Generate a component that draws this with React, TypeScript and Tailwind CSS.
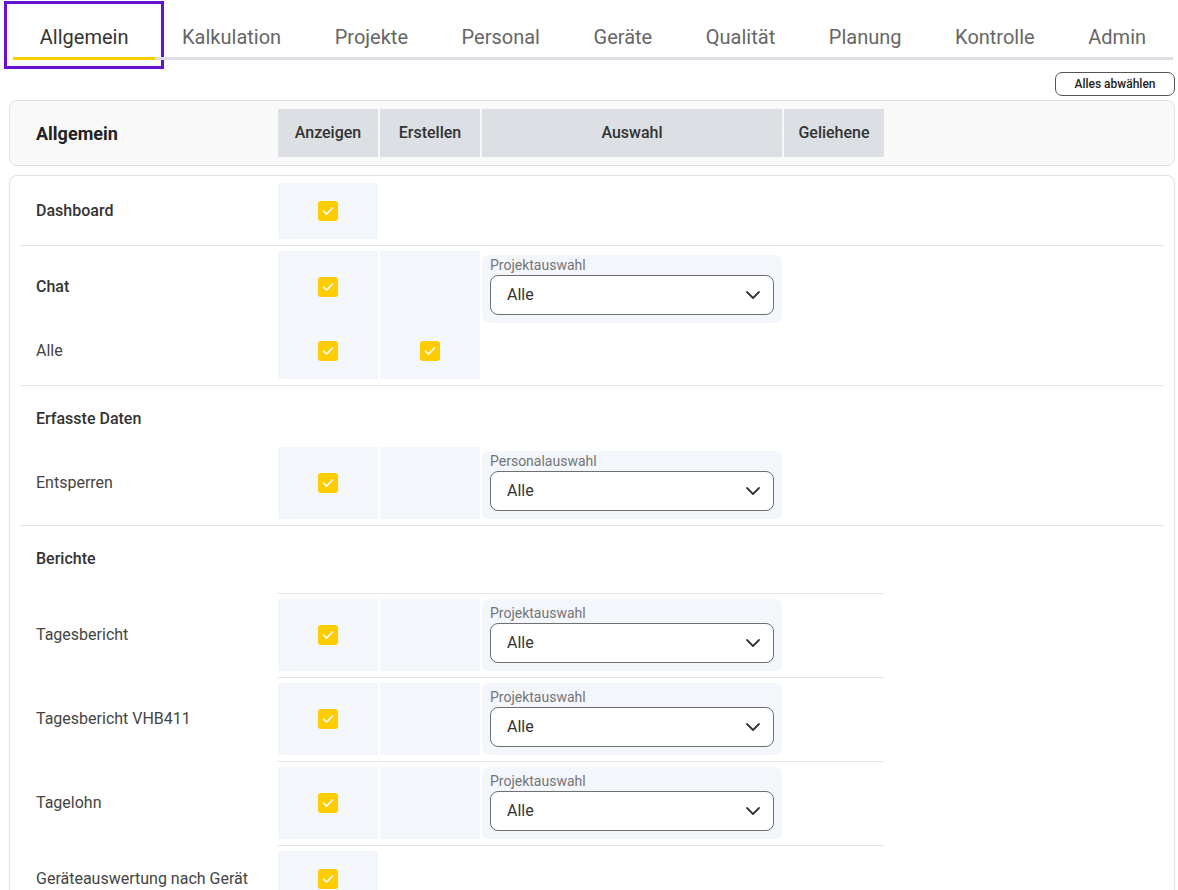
import { ChevronDown } from 'lucide-react';

const tabs = ['Allgemein', 'Kalkulation', 'Projekte', 'Personal', 'Geräte', 'Qualität', 'Planung', 'Kontrolle', 'Admin'];

function Check() {
  return (
    <span className="flex h-5 w-5 items-center justify-center rounded-[3px] bg-[#ffcc00]">
      <svg width="20" height="20" viewBox="0 0 20 20" fill="none">
        <path d="M5.5 10.2l3 2.9 6-6.1" stroke="white" strokeWidth="1.6" strokeLinecap="round" strokeLinejoin="round" />
      </svg>
    </span>
  );
}

function Cell({ checked, tall }: { checked?: boolean; tall?: boolean }) {
  return (
    <div className={`flex w-[100px] items-center justify-center bg-[#f3f6fb] ${tall ? 'h-[72px]' : 'h-14'}`}>
      {checked && <Check />}
    </div>
  );
}

function Select({ label, inset }: { label: string; inset?: boolean }) {
  return (
    <div className={`w-[300px] rounded-md bg-[#f3f6fb] px-2 pb-2 ${inset ? 'mt-1 h-[68px] pt-[2px]' : 'h-[72px] pt-1.5'}`}>
      <div className="text-[14px] leading-4 text-[#757575]">{label}</div>
      <div className="mt-0.5 flex h-10 items-center justify-between rounded-lg border border-[#6f6f6f] bg-white pl-4 pr-2">
        <span className="text-[16px] text-[#333]">Alle</span>
        <ChevronDown size={24} strokeWidth={1.8} className="text-[#333]" />
      </div>
    </div>
  );
}

function Label({ text, strong }: { text: string; strong?: boolean }) {
  return (
    <div
      className={`flex w-[258px] shrink-0 items-center pl-4 text-[16px] ${
        strong ? 'font-medium text-[#333]' : 'text-[#444]'
      }`}
    >
      {text}
    </div>
  );
}

function Section({ children, first }: { children: React.ReactNode; first?: boolean }) {
  return <div className={`pb-1.5 pt-[5px] ${first ? '' : 'border-t border-[#e3e3e3]'}`}>{children}</div>;
}

function BerichtRow({ label, select, create = true }: { label: string; select?: boolean; create?: boolean }) {
  return (
    <div className="flex">
      <Label text={label} />
      <div className="w-[606px] border-t border-[#e3e3e3] pb-1.5 pt-[5px]">
        <div className="flex gap-[2px]">
          <Cell checked tall={select} />
          {create && <Cell tall={select} />}
          {select && <Select label="Projektauswahl" />}
        </div>
      </div>
    </div>
  );
}

export default function App() {
  return (
    <div className="min-h-screen bg-white pl-[9px] pr-[3px] font-['Roboto',sans-serif] text-[#333]">
      {/* tabs */}
      <div className="flex pl-1 pt-[10px]">
        {tabs.map((t, i) => (
          <div
            key={t}
            className={`border-b-[3px] px-[26.8px] pb-2 pt-[15px] text-[20px] leading-6 ${
              i === 0
                ? 'border-[#ffcc00] text-[#333] outline-[3px] outline-offset-[6px] outline-[#6a10d0] outline-solid'
                : 'border-[#dcdfe4] text-[#666]'
            }`}
          >
            {t}
          </div>
        ))}
      </div>

      <div className="mt-3 flex justify-end">
        <button className="h-6 w-[120px] rounded-[7px] border border-[#555] text-[12px] font-medium text-[#222]">
          Alles abwählen
        </button>
      </div>

      {/* header card */}
      <div className="mt-1 flex rounded-lg border border-[#e0e0e0] bg-[#f9f9f9] py-2">
        <div className="flex w-[268px] items-center pl-[26px] text-[18px] font-bold text-[#222]">Allgemein</div>
        <div className="flex gap-[2px] text-[16px] font-medium text-[#333]">
          <div className="flex h-12 w-[100px] items-center justify-center bg-[#dcdfe4]">Anzeigen</div>
          <div className="flex h-12 w-[100px] items-center justify-center bg-[#dcdfe4]">Erstellen</div>
          <div className="flex h-12 w-[300px] items-center justify-center bg-[#dcdfe4]">Auswahl</div>
          <div className="flex h-12 w-[100px] items-center justify-center bg-[#dcdfe4]">Geliehene</div>
        </div>
      </div>

      {/* body card */}
      <div className="mt-[9px] rounded-lg border border-[#e0e0e0] px-[10px] pt-[2px]">
        <Section first>
          <div className="flex">
            <Label text="Dashboard" strong />
            <Cell checked />
          </div>
        </Section>

        <Section>
          <div className="flex">
            <Label text="Chat" strong />
            <div className="flex gap-[2px]">
              <Cell checked tall />
              <Cell tall />
              <div className="h-[72px]">
                <Select label="Projektauswahl" inset />
              </div>
            </div>
          </div>
          <div className="flex">
            <Label text="Alle" />
            <div className="flex gap-[2px]">
              <Cell checked />
              <Cell checked />
            </div>
          </div>
        </Section>

        <Section>
          <div className="flex h-14">
            <Label text="Erfasste Daten" strong />
          </div>
          <div className="flex">
            <Label text="Entsperren" />
            <div className="flex gap-[2px]">
              <Cell checked tall />
              <Cell tall />
              <div className="h-[72px]">
                <Select label="Personalauswahl" inset />
              </div>
            </div>
          </div>
        </Section>

        <Section>
          <div className="mb-1.5 flex h-14">
            <Label text="Berichte" strong />
          </div>
          <BerichtRow label="Tagesbericht" select />
          <BerichtRow label="Tagesbericht VHB411" select />
          <BerichtRow label="Tagelohn" select />
          <BerichtRow label="Geräteauswertung nach Gerät" create={false} />
        </Section>
      </div>
    </div>
  );
}
